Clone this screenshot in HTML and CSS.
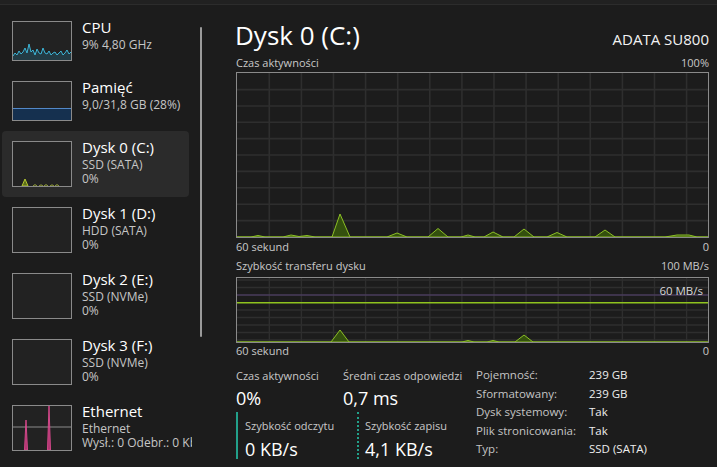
FILE: index.html
```html
<!DOCTYPE html>
<html lang="pl">
<head>
<meta charset="utf-8">
<title>Menedżer zadań</title>
<link rel="stylesheet" href="styles.css">
</head>
<body>
<div class="app">
  <div class="topbar"></div>
  <div class="layout">
    <nav class="sidebar">
      <div class="item">
        <div class="thumb t40">
          <svg viewBox="0 0 58 38" width="58" height="38">
            <path d="M0,38 L0,34 L2,31 L4,33 L6,29 L8,32 L10,30 L12,26 L14,31 L16,22 L18,30 L20,28 L22,33 L24,27 L26,31 L28,32 L30,26 L32,31 L34,32 L36,29 L38,33 L40,31 L42,30 L44,33 L46,31 L48,29 L50,33 L52,31 L54,28 L56,32 L58,30 L58,38 Z" fill="rgba(40,150,190,0.22)" stroke="none"/>
            <polyline points="0,34 2,31 4,33 6,29 8,32 10,30 12,26 14,31 16,22 18,30 20,28 22,33 24,27 26,31 28,32 30,26 32,31 34,32 36,29 38,33 40,31 42,30 44,33 46,31 48,29 50,33 52,31 54,28 56,32 58,30" fill="none" stroke="#3cb4d6" stroke-width="1"/>
          </svg>
        </div>
        <div class="info">
          <div class="name">CPU</div>
          <div class="sub">9% 4,80 GHz</div>
        </div>
      </div>
      <div class="item">
        <div class="thumb t40">
          <svg viewBox="0 0 58 38" width="58" height="38">
            <rect x="0" y="26.5" width="58" height="11.5" fill="#15304f"/>
            <line x1="0" y1="26.5" x2="58" y2="26.5" stroke="#5288c8" stroke-width="1"/>
          </svg>
        </div>
        <div class="info">
          <div class="name">Pamięć</div>
          <div class="sub">9,0/31,8 GB (28%)</div>
        </div>
      </div>
      <div class="item selected">
        <div class="thumb t46">
          <svg viewBox="0 0 58 44" width="58" height="44">
            <path d="M9,44 L12,37 L15,44 Z" fill="#5d6e1a" stroke="#b4c832" stroke-width="1"/>
            <path d="M20,44 L22,42.6 L24,44 M26,44 L28,42.8 L30,44 M31,44 L33,42.6 L35,44 M37,44 L39,42.8 L41,44 M42,44 L44,42.6 L46,44" fill="none" stroke="#9aa83a" stroke-width="1"/>
          </svg>
        </div>
        <div class="info">
          <div class="name">Dysk 0 (C:)</div>
          <div class="sub">SSD (SATA)</div>
          <div class="sub2">0%</div>
        </div>
      </div>
      <div class="item">
        <div class="thumb t46"></div>
        <div class="info">
          <div class="name">Dysk 1 (D:)</div>
          <div class="sub">HDD (SATA)</div>
          <div class="sub2">0%</div>
        </div>
      </div>
      <div class="item">
        <div class="thumb t46"></div>
        <div class="info">
          <div class="name">Dysk 2 (E:)</div>
          <div class="sub">SSD (NVMe)</div>
          <div class="sub2">0%</div>
        </div>
      </div>
      <div class="item">
        <div class="thumb t46"></div>
        <div class="info">
          <div class="name">Dysk 3 (F:)</div>
          <div class="sub">SSD (NVMe)</div>
          <div class="sub2">0%</div>
        </div>
      </div>
      <div class="item">
        <div class="thumb t46">
          <svg viewBox="0 0 58 44" width="58" height="44">
            <line x1="0" y1="21" x2="58" y2="21" stroke="#8a8a8a" stroke-width="1"/>
            <path d="M11.5,44 L13,14 L14.5,44 Z" fill="#c0387a" stroke="#e44c94" stroke-width="1" opacity="0.9"/>
            <path d="M34.5,44 L36,0 L37.5,44 Z" fill="#c0387a" stroke="#e44c94" stroke-width="1" opacity="0.9"/>
          </svg>
        </div>
        <div class="info">
          <div class="name">Ethernet</div>
          <div class="sub">Ethernet</div>
          <div class="sub2 clip">Wysł.: 0 Odebr.: 0 Kb/s</div>
        </div>
      </div>
    </nav>
    <div class="scroll"><div class="scroll-thumb"></div></div>
    <main class="content">
      <header class="head">
        <h1 class="title">Dysk 0 (C:)</h1>
        <div class="model">ADATA SU800</div>
      </header>

      <div class="glabel"><span>Czas aktywności</span><span>100%</span></div>
      <div class="graph g1">
        <svg viewBox="0 0 471 164" width="471" height="164">
          <g stroke="#2e2e2e" stroke-width="1.6">
            <path d="M32.3,0V164M64.4,0V164M96.5,0V164M128.6,0V164M160.7,0V164M192.8,0V164M224.9,0V164M257,0V164M289.1,0V164M321.2,0V164M353.3,0V164M385.4,0V164M417.5,0V164M449.6,0V164"/>
            <path d="M0,16.6H471M0,33H471M0,49.3H471M0,65.6H471M0,82H471M0,98.4H471M0,114.8H471M0,131.2H471M0,147.6H471"/>
          </g>
          <path d="M0,164 L14,164 L21,162.5 L28,164 L46,164 L54,162 L62,163.5 L70,162.5 L78,164 L95,164 L103,141 L113,164 L150,164 L160,160 L170,164 L191,164 L201,155.5 L211,164 L224,164 L231,162 L238,164 L247,164 L256,159 L266,164 L277,164 L287,156 L297,164 L310,164 L320,159.5 L330,164 L358,164 L368,157 L378,164 L428,164 L440,162 L452,162 L460,164 L471,164 Z" fill="#34500e" stroke="#8cbf26" stroke-width="1"/>
        </svg>
      </div>
      <div class="glabel foot"><span>60 sekund</span><span>0</span></div>

      <div class="glabel second"><span>Szybkość transferu dysku</span><span>100 MB/s</span></div>
      <div class="graph g2">
        <svg viewBox="0 0 471 64" width="471" height="64">
          <g stroke="#2e2e2e" stroke-width="1.4">
            <path d="M32.3,0V64M64.4,0V64M96.5,0V64M128.6,0V64M160.7,0V64M192.8,0V64M224.9,0V64M257,0V64M289.1,0V64M321.2,0V64M353.3,0V64M385.4,0V64M417.5,0V64M449.6,0V64"/>
            <path d="M0,2H471M0,9.5H471M0,32H471M0,39.5H471M0,47H471M0,54.5H471M0,62H471"/>
          </g>
          <line x1="0" y1="17" x2="471" y2="17" stroke="#4a3d5c" stroke-width="1.4"/>
          <line x1="0" y1="24.7" x2="471" y2="24.7" stroke="#8fc31f" stroke-width="1.4"/>
          <path d="M0,64 L94,64 L103,52 L112,64 L225,64 L231,62.5 L237,64 L250,64 L256,62.5 L262,64 L278,64 L287,57 L296,64 L471,64 Z" fill="#34500e" stroke="#8cbf26" stroke-width="1"/>
        </svg>
        <span class="limit">60 MB/s</span>
      </div>
      <div class="glabel foot last"><span>60 sekund</span><span>0</span></div>

      <section class="stats">
        <div class="left">
          <div class="row1">
            <div class="col c1">
              <div class="slabel">Czas aktywności</div>
              <div class="svalue">0%</div>
            </div>
            <div class="col">
              <div class="slabel">Średni czas odpowiedzi</div>
              <div class="svalue">0,7 ms</div>
            </div>
          </div>
          <div class="row2">
            <div class="rw read">
              <div class="slabel">Szybkość odczytu</div>
              <div class="svalue v2">0 KB/s</div>
            </div>
            <div class="rw write">
              <div class="slabel">Szybkość zapisu</div>
              <div class="svalue v2">4,1 KB/s</div>
            </div>
          </div>
        </div>
        <dl class="props">
          <dt>Pojemność:</dt><dd>239 GB</dd>
          <dt>Sformatowany:</dt><dd>239 GB</dd>
          <dt>Dysk systemowy:</dt><dd>Tak</dd>
          <dt>Plik stronicowania:</dt><dd>Tak</dd>
          <dt>Typ:</dt><dd>SSD (SATA)</dd>
        </dl>
      </section>
    </main>
  </div>
</div>
</body>
</html>
```
FILE: styles.css
```css
* { box-sizing: border-box; }
html, body {
  margin: 0;
  padding: 0;
  background: #1c1c1c;
}
body {
  width: 717px;
  height: 467px;
  overflow: hidden;
  font-family: "Open Sans", "Noto Sans", sans-serif;
  color: #ffffff;
}
.app { width: 717px; height: 467px; }
.topbar {
  height: 5px;
  background: #212121;
  border-bottom: 1px solid #2c2c2c;
}
.layout { display: flex; }

/* sidebar */
.sidebar {
  width: 200px;
  padding-top: 6px;
  flex: none;
}
.item {
  display: flex;
  gap: 10px;
  width: 187px;
  margin-left: 2px;
  padding: 10px;
  border-radius: 4px;
}
.item.selected { background: #2b2b2b; }
.thumb {
  width: 60px;
  flex: none;
  border: 1px solid #8a8a8a;
  background: #222222;
}
.thumb svg { display: block; }
.t40 { height: 40px; }
.t46 { height: 46px; }
.info { min-width: 0; }
.name {
  font-size: 15px;
  line-height: 15px;
  margin-top: -1px;
  color: #ffffff;
  white-space: nowrap;
}
.sub, .sub2 {
  font-size: 12px;
  line-height: 14px;
  color: #c6c6c6;
  white-space: nowrap;
}
.sub { margin-top: 3px; }
.clip { overflow: hidden; width: 110px; }

.scroll {
  width: 2px;
  flex: none;
}
.scroll-thumb {
  margin-top: 22px;
  width: 2px;
  height: 310px;
  background: #9a9a9a;
  border-radius: 1px;
}

/* content */
.content {
  width: 473px;
  margin-left: 34px;
  padding-top: 15px;
}
.head {
  display: flex;
  justify-content: space-between;
  align-items: baseline;
  height: 30px;
}
.title {
  margin: 0 0 0 -1px;
  font-weight: 400;
  font-size: 26px;
  line-height: 30px;
}
.model {
  font-size: 15px;
  line-height: 20px;
  color: #f2f2f2;
}
.glabel {
  display: flex;
  justify-content: space-between;
  font-size: 11px;
  line-height: 14px;
  color: #c8c8c8;
  margin-top: 6px;
}
.glabel.foot { margin-top: 2px; }
.glabel.foot.last { margin-top: 1px; }
.glabel.second { margin-top: 5px; }
.graph {
  position: relative;
  border: 1px solid #8a8a8a;
  background: #1c1c1c;
}
.graph svg { display: block; }
.g1 { height: 166px; margin-top: 2px; }
.g2 { height: 66px; margin-top: 4px; }
.limit {
  position: absolute;
  right: 5px;
  top: 6px;
  font-size: 11.5px;
  line-height: 14px;
  color: #d6d6d6;
}

/* stats */
.stats {
  display: flex;
  margin-top: 8px;
}
.left {
  width: 240px;
  flex: none;
  padding-top: 3px;
}
.row1 { display: flex; }
.row1 .col.c1 { width: 107px; }
.slabel {
  font-size: 11px;
  line-height: 14px;
  color: #c8c8c8;
  white-space: nowrap;
}
.svalue {
  font-size: 18px;
  line-height: 22px;
  margin-top: 4px;
  color: #ffffff;
  white-space: nowrap;
}
.row2 {
  display: flex;
  margin-top: 3px;
}
.rw { padding-top: 7px; }
.read {
  width: 121px;
  border-left: 2px solid #22a08a;
  padding-left: 7px;
}
.write {
  border-left: 2px dotted #22a08a;
  padding-left: 6px;
}
.svalue.v2 { line-height: 19px; margin-top: 7px; }

.props {
  margin: 0;
  display: grid;
  grid-template-columns: 113px auto;
  font-size: 11.5px;
  line-height: 18px;
}
.props dt { color: #c4c4c4; }
.props dd { margin: 0; color: #eeeeee; }
```
